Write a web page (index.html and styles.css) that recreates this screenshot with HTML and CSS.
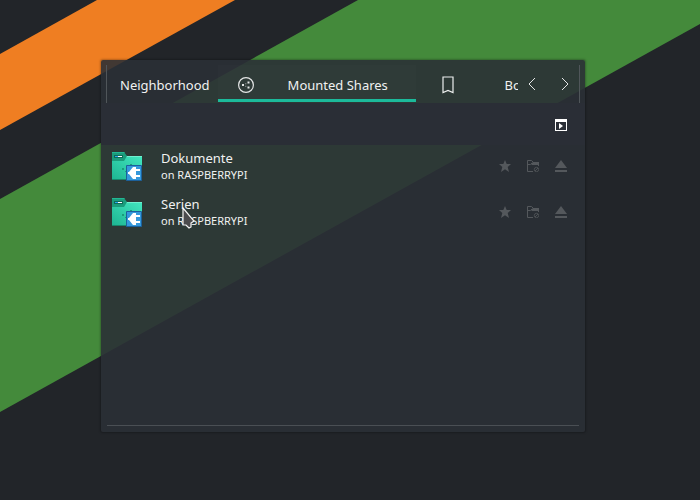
FILE: index.html
```html
<!DOCTYPE html>
<html lang="en">
<head>
<meta charset="utf-8">
<title>Mounted Shares</title>
<link rel="stylesheet" href="styles.css">
</head>
<body>
<svg class="wallpaper" viewBox="0 0 700 500" preserveAspectRatio="xMinYMin slice" aria-hidden="true">
  <path fill="#ef7e22" d="M97 0H235L0 130V54Z"/>
  <path fill="#448a3b" d="M358 0H700V24L0 412V199Z"/>
</svg>

<svg class="defs" aria-hidden="true">
  <defs>
    <linearGradient id="folder-fill" x1="1" y1="0" x2="0" y2="1">
      <stop offset="0" stop-color="#43e7c0"/>
      <stop offset="1" stop-color="#1db491"/>
    </linearGradient>
    <symbol id="folder" viewBox="0 0 30 30">
      <path fill="url(#folder-fill)" d="M0 4H30V28H0Z"/>
      <path fill="#6ff0d0" d="M14 4H30V5H14Z"/>
      <path fill="#17866b" d="M0 27H15V28H0Z"/>
      <path fill="#1b9c7c" d="M0 0H12L15 4L12 9H0Z"/>
      <path fill="#22b894" d="M0 0H12L13 1H0Z"/>
      <path fill="#0e6b57" d="M2 3H11V6H2Z"/>
      <path fill="#22a7f0" d="M3 4H7V5H3Z"/>
      <path fill="#fff" d="M6 4H10V5H6Z"/>
      <path fill="#1b9c7c" d="M10 16h2v2h-2zM13 19h1v1h-1zM18 12h2v1h-2z"/>
      <path fill="#3498db" stroke="#1c609b" d="M14.500 13.500H29.500V28.500H14.500Z"/>
      <path fill="#fff" d="M16 20H17L21 15H24V17H28V19H24V23H28V25H24V27H21L17 22H16Z"/>
    </symbol>
    <symbol id="star" viewBox="0 0 12 12">
      <path fill="currentColor" d="M6 0L7.700 4H12L8.700 7L10 12L6 9.200L2 12L3.300 7L0 4H4.300Z"/>
    </symbol>
    <symbol id="folder-sync" viewBox="0 0 12 12">
      <path fill="none" stroke="currentColor" d="M6 11.500H.5V.5H4.500L6.500 2.500H11.500V6"/>
      <path fill="currentColor" d="M6 2H12V5H5L4 4Z"/>
      <path fill="none" stroke="currentColor" d="M1 4.500H3.500L5 3"/>
      <circle cx="9.500" cy="9.500" r="2.200" fill="none" stroke="currentColor" stroke-width=".8"/>
      <path fill="none" stroke="currentColor" stroke-width=".8" d="M8 11L11 8"/>
    </symbol>
    <symbol id="eject" viewBox="0 0 12 12">
      <path fill="currentColor" d="M6 0L12 8H0ZM0 10H12V12H0Z"/>
    </symbol>
  </defs>
</svg>

<main class="panel">
  <header class="tabbar">
    <div class="tabs" role="tablist">
      <button class="tab tab-first" role="tab" aria-selected="false">Neighborhood</button>
      <button class="tab tab-active" role="tab" aria-selected="true">
        <svg class="icon-share" viewBox="0 0 16 16" aria-hidden="true">
          <circle cx="8" cy="8" r="7.400" fill="none" stroke="#e4e6e6" stroke-width="1.200"/>
          <path fill="#e4e6e6" d="M4 7h2v2H4zM9.500 4.500h2v2h-2zM9.500 9.500h2v2h-2z"/>
          <path fill="#a9adac" d="M7.300 6.200h1v1h-1zM7.300 8.800h1v1h-1z"/>
        </svg>
        <span class="tab-label">Mounted Shares</span>
      </button>
      <button class="tab tab-last" role="tab" aria-selected="false">
        <svg class="icon-bookmark" viewBox="0 0 12 18" aria-hidden="true">
          <path fill="none" stroke="#eceeee" stroke-width="1.200" d="M1 1H11V16.500L6 14.500L1 16.500Z"/>
        </svg>
        <span class="tab-label">Bookmarks</span>
      </button>
    </div>
    <div class="scrollers">
      <button class="scroll" aria-label="Previous tabs">
        <svg viewBox="0 0 8 14" aria-hidden="true"><path d="M7 1L1 7L7 13"/></svg>
      </button>
      <button class="scroll" aria-label="Next tabs">
        <svg viewBox="0 0 8 14" aria-hidden="true"><path d="M1 1L7 7L1 13"/></svg>
      </button>
    </div>
  </header>

  <div class="toolbar">
    <button class="action" aria-label="Open window">
      <svg viewBox="0 0 12 12" aria-hidden="true">
        <path fill="#fff" fill-rule="evenodd" d="M0 0H12V12H0ZM1 3V11H11V3Z"/>
        <path fill="#fff" d="M4 4L8 7L4 10Z"/>
      </svg>
    </button>
  </div>

  <ul class="shares">
    <li class="share">
      <svg class="folder" aria-hidden="true"><use href="#folder"/></svg>
      <div class="share-text">
        <div class="share-name">Dokumente</div>
        <div class="share-host">on RASPBERRYPI</div>
      </div>
      <div class="share-actions">
        <button class="action" aria-label="Bookmark Dokumente"><svg><use href="#star"/></svg></button>
        <button class="action" aria-label="Synchronize Dokumente"><svg><use href="#folder-sync"/></svg></button>
        <button class="action" aria-label="Unmount Dokumente"><svg><use href="#eject"/></svg></button>
      </div>
    </li>
    <li class="share">
      <svg class="folder" aria-hidden="true"><use href="#folder"/></svg>
      <div class="share-text">
        <div class="share-name">Serien</div>
        <div class="share-host">on RASPBERRYPI</div>
        <svg class="pointer" viewBox="0 0 14 24" aria-hidden="true">
          <path fill="#4b4b4d" stroke="#f4f4f4" stroke-width="1.200" d="M1 1L12 14L9 16V20L7 21L4 18H1Z"/>
        </svg>
      </div>
      <div class="share-actions">
        <button class="action" aria-label="Bookmark Serien"><svg><use href="#star"/></svg></button>
        <button class="action" aria-label="Synchronize Serien"><svg><use href="#folder-sync"/></svg></button>
        <button class="action" aria-label="Unmount Serien"><svg><use href="#eject"/></svg></button>
      </div>
    </li>
  </ul>
</main>
</body>
</html>
```
FILE: styles.css
```css
* {
  box-sizing: border-box;
}

body {
  margin: 0;
  min-height: 100vh;
  padding: 60px 115px 68px 101px;
  display: flex;
  background: #222529;
  color: #f0f1f1;
  font: 13px/18px "Noto Sans", sans-serif;
}

button {
  margin: 0;
  padding: 0;
  border: 0;
  background: none;
  color: inherit;
  font: inherit;
}

svg {
  display: block;
  flex: none;
}

.wallpaper {
  position: absolute;
  inset: 0;
  width: 100%;
  height: 100%;
}

.defs {
  position: absolute;
  width: 0;
  height: 0;
}

.panel {
  position: relative;
  flex: 1;
  min-width: 0;
  display: flex;
  flex-direction: column;
  padding: 5px 5px 6px;
  border-radius: 2px;
  background: rgba(43, 47, 54, 0.89);
  box-shadow: 0 0 2px 1px rgba(0, 0, 0, 0.25);
}

.tabbar {
  height: 38px;
  display: flex;
  border: solid #50565a;
  border-width: 0 1px;
}

.tabs {
  flex: 1;
  min-width: 0;
  display: flex;
  overflow: hidden;
}

.tab {
  flex: none;
  display: flex;
  align-items: center;
  padding-top: 2px;
  white-space: nowrap;
}

.tab-first {
  padding: 2px 8px 0 13px;
}

.tab-active {
  width: 198px;
  gap: 34px;
  padding: 5px 0 0 20px;
  border-bottom: 3px solid #1cba9b;
  margin-bottom: 1px;
  background: rgba(255, 255, 255, 0.01);
}

.tab-last {
  gap: 51px;
  padding-left: 26px;
}

.icon-share {
  width: 16px;
  height: 16px;
}

.icon-bookmark {
  width: 12px;
  height: 18px;
}

.scrollers {
  display: flex;
  gap: 5px;
}

.scroll {
  width: 28px;
  display: grid;
  place-items: center;
}

.scroll svg {
  width: 8px;
  height: 14px;
  fill: none;
  stroke: #e4e6e6;
}

.toolbar {
  height: 42px;
  margin: 0 -5px;
  padding: 2px 10px 0 0;
  display: flex;
  justify-content: flex-end;
  align-items: center;
  background: #2a2e36;
}

.action {
  width: 28px;
  height: 28px;
  display: grid;
  place-items: center;
}

.action svg {
  width: 12px;
  height: 12px;
}

.shares {
  flex: 1;
  margin: 0 1px;
  padding: 0;
  list-style: none;
  border-bottom: 1px solid #4a4f54;
}

.share {
  height: 46px;
  display: flex;
  align-items: flex-start;
  padding: 4px 4px 0 5px;
}

.folder {
  width: 30px;
  height: 30px;
  margin: 3px 19px 0 0;
}

.share-text {
  position: relative;
  flex: 1;
}

.share-host {
  font-size: 11px;
  line-height: 16px;
}

.share-actions {
  display: flex;
  padding-top: 3px;
  color: #54585c;
}

.pointer {
  position: absolute;
  left: 21px;
  top: 12px;
  width: 14px;
  height: 24px;
}
```
